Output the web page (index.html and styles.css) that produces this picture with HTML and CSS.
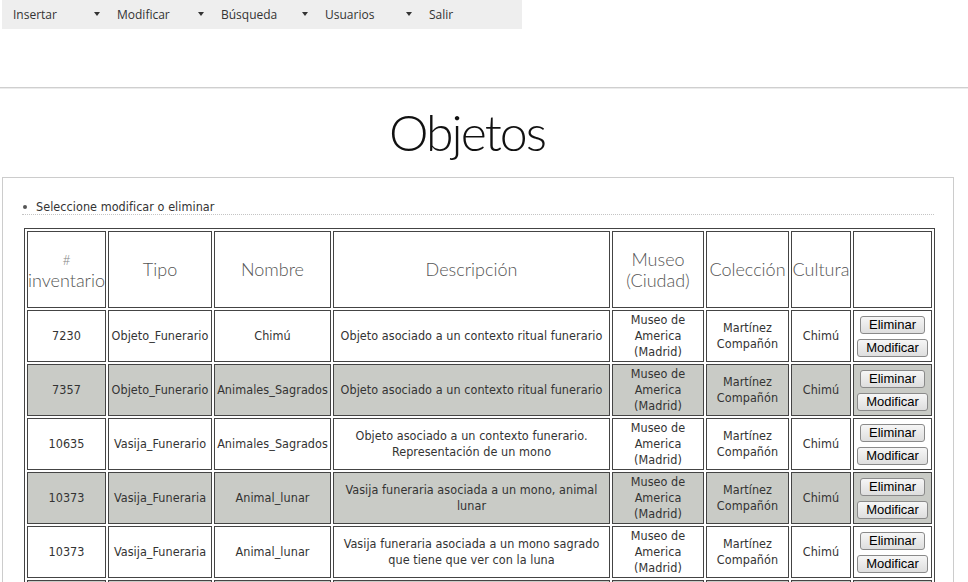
FILE: index.html
```html
<!DOCTYPE html>
<html lang="es">
<head>
<meta charset="utf-8">
<title>Objetos</title>
<link rel="stylesheet" href="styles.css">
</head>
<body>
<header class="top">
  <nav class="menu">
    <div class="menu-item">Insertar<span class="caret"></span></div>
    <div class="menu-item">Modificar<span class="caret"></span></div>
    <div class="menu-item">Búsqueda<span class="caret"></span></div>
    <div class="menu-item">Usuarios<span class="caret"></span></div>
    <div class="menu-item">Salir</div>
  </nav>
</header>
<h1 class="title">Objetos</h1>
<section class="box">
  <ul class="hint">
    <li>Seleccione modificar o eliminar</li>
  </ul>
  <table class="grid">
    <colgroup>
      <col class="c1"><col class="c2"><col class="c3"><col class="c4"><col class="c5"><col class="c6"><col class="c7"><col class="c8">
    </colgroup>
    <thead>
      <tr>
        <th><span class="hash">#</span><br>inventario</th>
        <th>Tipo</th>
        <th>Nombre</th>
        <th>Descripción</th>
        <th>Museo<br>(Ciudad)</th>
        <th>Colección</th>
        <th>Cultura</th>
        <th></th>
      </tr>
    </thead>
    <tbody>
      <tr>
        <td>7230</td><td>Objeto_Funerario</td><td>Chimú</td>
        <td>Objeto asociado a un contexto ritual funerario</td>
        <td>Museo de<br>America<br>(Madrid)</td><td>Martínez<br>Compañón</td><td>Chimú</td>
        <td><div class="actions"><button class="btn">Eliminar</button><button class="btn">Modificar</button></div></td>
      </tr>
      <tr class="alt">
        <td>7357</td><td>Objeto_Funerario</td><td>Animales_Sagrados</td>
        <td>Objeto asociado a un contexto ritual funerario</td>
        <td>Museo de<br>America<br>(Madrid)</td><td>Martínez<br>Compañón</td><td>Chimú</td>
        <td><div class="actions"><button class="btn">Eliminar</button><button class="btn">Modificar</button></div></td>
      </tr>
      <tr>
        <td>10635</td><td>Vasija_Funerario</td><td>Animales_Sagrados</td>
        <td>Objeto asociado a un contexto funerario.<br>Representación de un mono</td>
        <td>Museo de<br>America<br>(Madrid)</td><td>Martínez<br>Compañón</td><td>Chimú</td>
        <td><div class="actions"><button class="btn">Eliminar</button><button class="btn">Modificar</button></div></td>
      </tr>
      <tr class="alt">
        <td>10373</td><td>Vasija_Funeraria</td><td>Animal_lunar</td>
        <td>Vasija funeraria asociada a un mono, animal<br>lunar</td>
        <td>Museo de<br>America<br>(Madrid)</td><td>Martínez<br>Compañón</td><td>Chimú</td>
        <td><div class="actions"><button class="btn">Eliminar</button><button class="btn">Modificar</button></div></td>
      </tr>
      <tr>
        <td>10373</td><td>Vasija_Funeraria</td><td>Animal_lunar</td>
        <td>Vasija funeraria asociada a un mono sagrado<br>que tiene que ver con la luna</td>
        <td>Museo de<br>America<br>(Madrid)</td><td>Martínez<br>Compañón</td><td>Chimú</td>
        <td><div class="actions"><button class="btn">Eliminar</button><button class="btn">Modificar</button></div></td>
      </tr>
      <tr class="alt">
        <td>10373</td><td>Vasija_Funeraria</td><td>Animal_lunar</td>
        <td>Vasija funeraria</td>
        <td>Museo de<br>America<br>(Madrid)</td><td>Martínez<br>Compañón</td><td>Chimú</td>
        <td><div class="actions"><button class="btn">Eliminar</button><button class="btn">Modificar</button></div></td>
      </tr>
    </tbody>
  </table>
</section>
</body>
</html>
```
FILE: styles.css
```css
html, body {
  margin: 0;
  padding: 0;
  background: #fff;
}
body {
  font-family: "DejaVu Sans Condensed", "DejaVu Sans", sans-serif;
  font-stretch: condensed;
  font-size: 12.5px;
  letter-spacing: 0.05px;
  color: #333;
}
.top {
  height: 87px;
  border-bottom: 1px solid #cfcfcf;
  box-shadow: 0 1px 0 #ececec;
}
.menu {
  display: flex;
  margin-left: 2px;
  width: 520px;
  height: 29px;
  background: #eeeeee;
}
.menu-item {
  position: relative;
  box-sizing: border-box;
  width: 104px;
  padding-left: 11px;
  line-height: 29px;
  font-family: "Open Sans", sans-serif;
  font-stretch: normal;
  letter-spacing: 0;
  font-size: 12px;
  color: #333;
}
.caret {
  position: absolute;
  left: 92px;
  top: 12px;
  width: 0;
  height: 0;
  border-left: 3.5px solid transparent;
  border-right: 3.5px solid transparent;
  border-top: 4px solid #333;
}
.title {
  margin: 0;
  width: 934px;
  height: 89px;
  line-height: 89px;
  text-align: center;
  font-family: "Lato", sans-serif;
  font-stretch: normal;
  font-weight: 300;
  font-size: 50px;
  letter-spacing: -2px;
  color: #111;
}
.box {
  margin-left: 2px;
  width: 952px;
  box-sizing: border-box;
  border: 1px solid #cccccc;
  padding: 21px 19px 0 19px;
}
.hint {
  margin: 0;
  padding: 0;
  list-style: none;
}
.hint li {
  position: relative;
  padding-left: 14px;
  line-height: 15px;
  border-bottom: 1px dotted #c4c4c4;
  color: #333;
}
.hint li::before {
  content: "";
  position: absolute;
  left: 1px;
  top: 6px;
  width: 4px;
  height: 4px;
  border-radius: 50%;
  background: #555;
}
.grid {
  margin: 13px 0 0 2px;
  width: 911px;
  table-layout: fixed;
  border: 1px solid #444;
  border-spacing: 2px;
}
.c1 { width: 79px; }
.c2 { width: 104px; }
.c3 { width: 117px; }
.c4 { width: 277px; }
.c5 { width: 92px; }
.c6 { width: 83px; }
.c7 { width: 60px; }
.c8 { width: 79px; }
.grid th, .grid td {
  box-sizing: border-box;
  border: 1px solid #444;
  padding: 1px 0;
  text-align: center;
  vertical-align: middle;
  overflow: visible;
  white-space: nowrap;
}
.grid th {
  height: 77px;
  font-family: "Lato", sans-serif;
  font-stretch: normal;
  letter-spacing: 0;
  font-weight: 300;
  font-size: 18px;
  line-height: 21px;
  color: #555;
}
.hash {
  font-size: 14px;
  color: #888;
}
.grid td {
  height: 52px;
  line-height: 16px;
}
.grid tr.alt td {
  background: #c9cbc6;
}
.actions {
  display: flex;
  flex-direction: column;
  align-items: center;
  gap: 5px;
}
.btn {
  font-family: "Liberation Sans", Arial, sans-serif;
  font-size: 13px;
  line-height: 14px;
  letter-spacing: 0;
  color: #000;
  padding: 1px 8px;
  border: 1px solid #8a8a8a;
  border-radius: 3px;
  background: linear-gradient(#f6f6f6, #dedede);
}
```
